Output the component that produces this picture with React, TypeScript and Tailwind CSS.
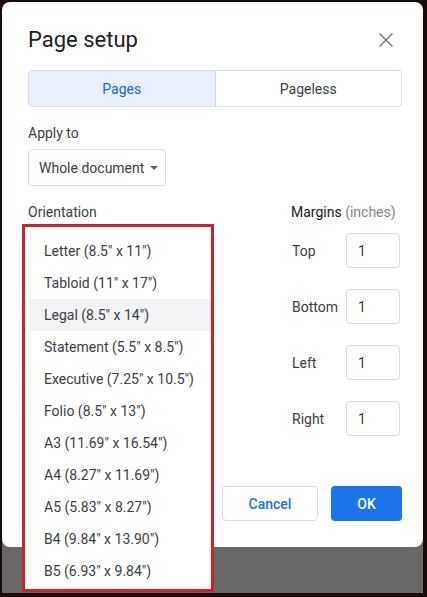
import { X } from 'lucide-react';

const paperSizes = [
  'Letter (8.5" x 11")',
  'Tabloid (11" x 17")',
  'Legal (8.5" x 14")',
  'Statement (5.5" x 8.5")',
  'Executive (7.25" x 10.5")',
  'Folio (8.5" x 13")',
  'A3 (11.69" x 16.54")',
  'A4 (8.27" x 11.69")',
  'A5 (5.83" x 8.27")',
  'B4 (9.84" x 13.90")',
  'B5 (6.93" x 9.84")',
];

const margins = ['Top', 'Bottom', 'Left', 'Right'];

const App = () => {
  return (
    <div
      className="relative w-[427px] h-[597px] bg-[#1c0b0b] pt-[2px] pl-[2px] pr-[4px] pb-[4px] flex flex-col text-[#3c4043]"
      style={{ fontFamily: 'Roboto, "Noto Sans", Arial, sans-serif' }}
    >
      <div className="relative z-10 bg-white rounded-lg pt-[22px] pl-[26px] pr-[21px] pb-[26px]">
        <div className="flex items-center justify-between h-8">
          <h2 className="text-[22px] text-[#202124] leading-8">Page setup</h2>
          <X size={24} strokeWidth={1.4} className="text-[#6f7378] mr-[4px]" />
        </div>

        <div className="mt-[14px] h-[37px] flex border border-[#dadce0] rounded-[4px] overflow-hidden text-sm">
          <div className="flex-1 flex items-center justify-center bg-[#e8f0fe] text-[#1967d2] border-r border-[#c6d4ec]">
            Pages
          </div>
          <div className="flex-1 flex items-center justify-center text-[#3c4043]">Pageless</div>
        </div>

        <p className="mt-4 h-5 leading-5 text-sm text-[#3c4043]">Apply to</p>
        <div className="mt-[6px] w-[138px] h-[37px] border border-[#dadce0] rounded-[4px] flex items-center pl-[10px] text-sm">
          Whole document
          <svg width="8" height="4" viewBox="0 0 8 4" className="ml-[6px]">
            <polygon points="0,0 8,0 4,4" fill="#5f6368" />
          </svg>
        </div>

        <div className="mt-4 flex">
          <div className="flex-1">
            <p className="h-5 leading-5 text-sm">Orientation</p>
          </div>
          <div className="w-[111px]">
            <p className="h-5 leading-5 text-sm whitespace-nowrap text-[#202124]">
              Margins <span className="text-[#80868b]">(inches)</span>
            </p>
            <div className="mt-[11px] flex flex-col gap-[21px]">
              {margins.map(m => (
                <div key={m} className="flex items-center">
                  <span className="w-[55px] pl-[1px] text-sm">{m}</span>
                  <div className="w-[54px] h-[35px] border border-[#dadce0] rounded-[4px] flex items-center pl-[11px] text-sm">
                    1
                  </div>
                </div>
              ))}
            </div>
          </div>
        </div>

        <div className="mt-[50px] flex justify-end gap-[13px] text-sm font-medium">
          <button className="w-[96px] h-[35px] border border-[#dadce0] rounded-[4px] text-[#1a73e8]">
            Cancel
          </button>
          <button className="w-[71px] h-[35px] rounded-[4px] bg-[#1a73e8] text-white">OK</button>
        </div>
      </div>
      <div className="flex-1 -mt-2 bg-[#686868]" />

      <div className="absolute z-20 left-[22px] top-[224px] w-[192px] h-[368px] border-[3px] border-[#d1202f] bg-white pt-2 pb-[2px] pl-[5px]">
        {paperSizes.map(size => (
          <div
            key={size}
            className={`h-8 flex items-center px-[14px] text-sm text-[#3c4043] whitespace-nowrap ${
              size.startsWith('Legal') ? 'bg-[#f1f3f4]' : ''
            }`}
          >
            {size}
          </div>
        ))}
      </div>
    </div>
  );
};

export default App;
